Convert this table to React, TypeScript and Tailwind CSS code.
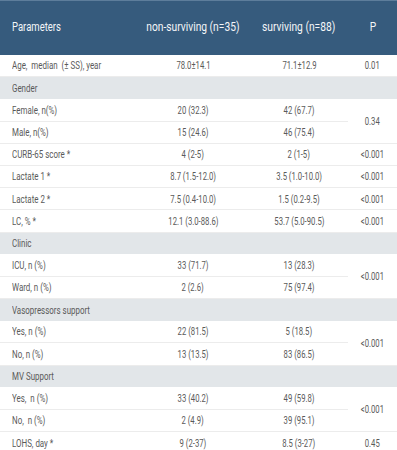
type Row =
  | { kind: 'section'; label: string }
  | { kind: 'data'; label: string; a: string; b: string; p?: string; span?: number; skipP?: boolean };

const rows: Row[] = [
  { kind: 'data', label: 'Age,  median  (± SS), year', a: '78.0±14.1', b: '71.1±12.9', p: '0.01' },
  { kind: 'section', label: 'Gender' },
  { kind: 'data', label: 'Female, n(%)', a: '20 (32.3)', b: '42 (67.7)', p: '0.34', span: 2 },
  { kind: 'data', label: 'Male, n(%)', a: '15 (24.6)', b: '46 (75.4)', skipP: true },
  { kind: 'data', label: 'CURB-65 score *', a: '4 (2-5)', b: '2 (1-5)', p: '<0.001' },
  { kind: 'data', label: 'Lactate 1 *', a: '8.7 (1.5-12.0)', b: '3.5 (1.0-10.0)', p: '<0.001' },
  { kind: 'data', label: 'Lactate 2 *', a: '7.5 (0.4-10.0)', b: '1.5 (0.2-9.5)', p: '<0.001' },
  { kind: 'data', label: 'LC, % *', a: '12.1 (3.0-88.6)', b: '53.7 (5.0-90.5)', p: '<0.001' },
  { kind: 'section', label: 'Clinic' },
  { kind: 'data', label: 'ICU, n (%)', a: '33 (71.7)', b: '13 (28.3)', p: '<0.001', span: 2 },
  { kind: 'data', label: 'Ward, n (%)', a: '2 (2.6)', b: '75 (97.4)', skipP: true },
  { kind: 'section', label: 'Vasopressors support' },
  { kind: 'data', label: 'Yes, n (%)', a: '22 (81.5)', b: '5 (18.5)', p: '<0.001', span: 2 },
  { kind: 'data', label: 'No, n (%)', a: '13 (13.5)', b: '83 (86.5)', skipP: true },
  { kind: 'section', label: 'MV Support' },
  { kind: 'data', label: 'Yes,  n (%)', a: '33 (40.2)', b: '49 (59.8)', p: '<0.001', span: 2 },
  { kind: 'data', label: 'No,  n (%)', a: '2 (4.9)', b: '39 (95.1)', skipP: true },
  { kind: 'data', label: 'LOHS, day *', a: '9 (2-37)', b: '8.5 (3-27)', p: '0.45' },
];

// the source font is a condensed face we don't have, so squeeze Roboto horizontally
function Left({ children }: { children: string }) {
  return <span className="inline-block whitespace-pre origin-left scale-x-[0.69]">{children}</span>;
}

function Mid({ children }: { children: string }) {
  return <span className="inline-block whitespace-pre origin-center scale-x-[0.67]">{children}</span>;
}

const line = 'border-b border-[#ececec]';

export default function App() {
  return (
    <div className="w-[397px] h-[450px] overflow-hidden bg-white font-['Roboto',sans-serif]">
      <table className="w-full border-collapse table-fixed text-[11.5px] text-[#5a5a5a]">
        <colgroup>
          <col className="w-[136px]" />
          <col className="w-[114px]" />
          <col className="w-[98px]" />
          <col />
        </colgroup>
        <thead>
          <tr className="h-[54px] bg-[#365b7d] text-[#f4f6f8] text-[12.5px] border-t border-[#5d7d9b]">
            <th className="text-left font-normal pl-3">
              <span className="inline-block whitespace-pre origin-left scale-x-[0.76]">Parameters</span>
            </th>
            <th className="font-normal">
              <span className="inline-block whitespace-pre scale-x-[0.82]">non-surviving (n=35)</span>
            </th>
            <th className="font-normal">
              <span className="inline-block whitespace-pre scale-x-[0.82]">surviving (n=88)</span>
            </th>
            <th className="font-normal">
              <span className="inline-block scale-x-[0.82]">P</span>
            </th>
          </tr>
        </thead>
        <tbody>
          {rows.map((r, i) =>
            r.kind === 'section' ? (
              <tr key={i} className="h-[22.2px] bg-[#e2e6e9]">
                <td colSpan={4} className="pl-3 p-0 pt-px">
                  <Left>{r.label}</Left>
                </td>
              </tr>
            ) : (
              <tr key={i} className="h-[22.2px]">
                <td className={`pl-3 p-0 pt-px ${line}`}>
                  <Left>{r.label}</Left>
                </td>
                <td className={`p-0 pt-px text-center ${line}`}>
                  <Mid>{r.a}</Mid>
                </td>
                <td className={`p-0 pt-px text-center ${line}`}>
                  <Mid>{r.b}</Mid>
                </td>
                {!r.skipP && (
                  <td rowSpan={r.span ?? 1} className={`p-0 pt-px text-center ${line}`}>
                    <Mid>{r.p ?? ''}</Mid>
                  </td>
                )}
              </tr>
            ),
          )}
        </tbody>
      </table>
    </div>
  );
}
